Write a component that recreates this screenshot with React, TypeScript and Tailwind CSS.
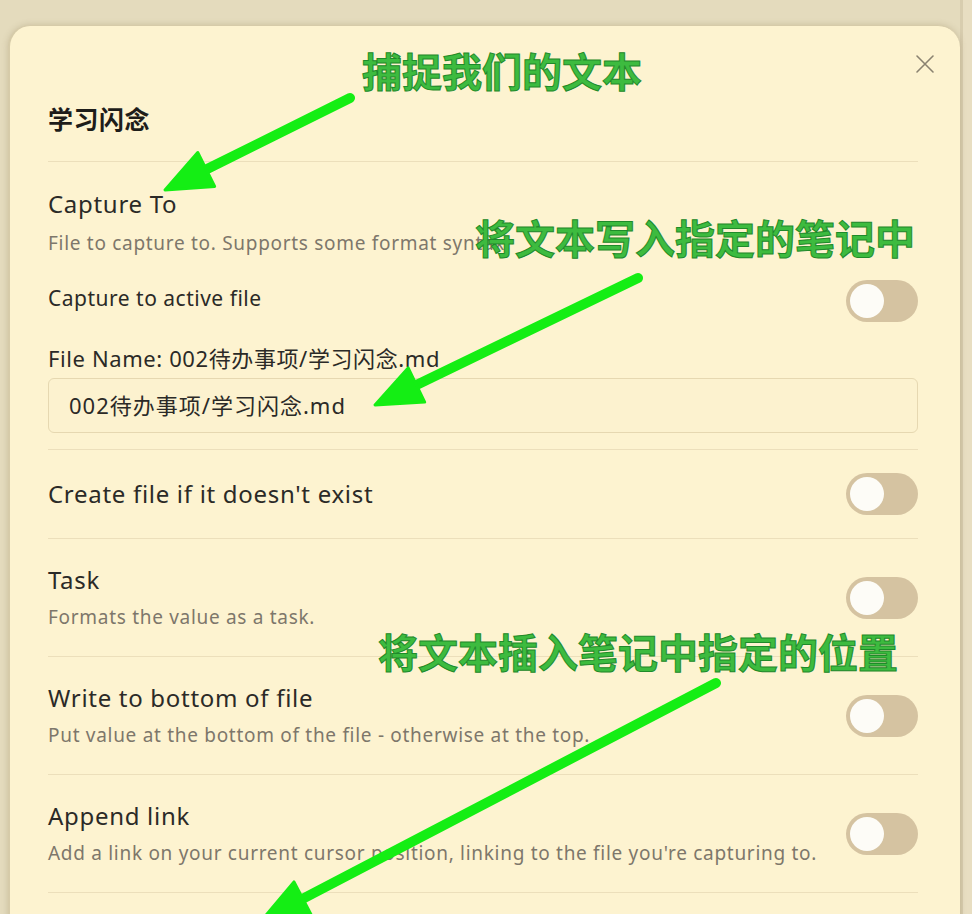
import React from 'react';

const uiFont = { fontFamily: '"Noto Sans", "Noto Sans CJK SC", sans-serif' };
const noteFont = { fontFamily: '"Noto Sans CJK SC", sans-serif' };

const Toggle: React.FC = () => (
    <div className="w-[72px] h-[42px] shrink-0 rounded-full bg-[#d5c3a1] p-[4px] flex items-center">
        <div className="w-[34px] h-[34px] rounded-full bg-[#fdfcf7]" />
    </div>
);

interface SettingRowProps {
    title: string;
    desc?: string;
}

const SettingRow: React.FC<SettingRowProps> = ({ title, desc }) => (
    <div className={`flex items-center justify-between gap-6 border-b border-[#ecdfbb] ${desc ? 'py-[26px]' : 'py-[23px]'}`}>
        <div className="flex-1">
            <div className="text-[24px] leading-[30px] tracking-[0.7px] text-[#2b2a27]">{title}</div>
            {desc && <div className="mt-[9px] text-[19px] leading-[26px] tracking-[0.7px] text-[#7d776b]">{desc}</div>}
        </div>
        <Toggle />
    </div>
);

const Note: React.FC<{ text: string; className: string }> = ({ text, className }) => (
    <div
        className={`absolute text-[40px] leading-[44px] font-bold text-[#3dbb3f] whitespace-nowrap ${className}`}
        style={{ ...noteFont, WebkitTextStroke: '1px #1f8a2a' }}
    >
        {text}
    </div>
);

const Arrows: React.FC = () => {
    const arrows = [
        { x1: 350, y1: 98, x2: 165, y2: 190 },
        { x1: 638, y1: 278, x2: 375, y2: 405 },
        { x1: 716, y1: 683, x2: 262, y2: 920 },
    ];
    return (
        <svg className="absolute inset-0 pointer-events-none" width="972" height="914" viewBox="0 0 972 914">
            {arrows.map((a, i) => {
                const dx = a.x2 - a.x1;
                const dy = a.y2 - a.y1;
                const len = Math.sqrt(dx * dx + dy * dy);
                const ux = dx / len;
                const uy = dy / len;
                const head = 46;
                const half = 19;
                const bx = a.x2 - ux * head;
                const by = a.y2 - uy * head;
                const p1 = `${bx - uy * half},${by + ux * half}`;
                const p2 = `${bx + uy * half},${by - ux * half}`;
                return (
                    <g key={i}>
                        <line x1={a.x1} y1={a.y1} x2={bx + ux * 4} y2={by + uy * 4} stroke="#14ee14" strokeWidth={10} strokeLinecap="round" />
                        <polygon points={`${a.x2},${a.y2} ${p1} ${p2}`} fill="#14ee14" strokeLinejoin="round" stroke="#14ee14" strokeWidth={3} />
                    </g>
                );
            })}
        </svg>
    );
};

export default function App() {
    return (
        <div className="relative w-[972px] h-[914px] overflow-hidden bg-[#e4dbbd]" style={uiFont}>
            <div className="absolute right-0 top-0 bottom-0 w-[12px] bg-[#e8dec2] border-l-[3px] border-[#d8cdaf]" />
            <div className="relative ml-[8px] mt-[25px] w-[952px] min-h-[900px] rounded-t-[22px] bg-[#fdf3d0] border-l-[2px] border-t border-[#d6cba9] shadow-[0_0_6px_rgba(120,100,60,0.25)] pl-[38px] pr-[42px] pt-[78px]">
                <button className="absolute top-[28px] right-[25px] w-[20px] h-[20px] text-[#8a8270]">
                    <svg viewBox="0 0 20 20" width="20" height="20" fill="none" stroke="currentColor" strokeWidth="1.6" strokeLinecap="round">
                        <path d="M2 2 L18 18 M18 2 L2 18" />
                    </svg>
                </button>

                <h2 className="text-[25px] leading-[30px] tracking-[0.5px] font-bold text-[#1e1d1a] mb-[27px]">学习闪念</h2>

                <div className="border-t border-[#ecdfbb]" />

                <div className="pt-[27px] pb-[16px] border-b border-[#ecdfbb]">
                    <div className="text-[24px] leading-[30px] tracking-[0.7px] text-[#2b2a27]">Capture To</div>
                    <div className="mt-[11px] text-[19px] leading-[26px] tracking-[0.7px] text-[#7d776b]">File to capture to. Supports some format syntax.</div>
                    <div className="mt-[24px] flex items-center justify-between">
                        <span className="text-[21px] leading-[28px] tracking-[0.5px] text-[#2b2a27] -mt-[6px]">Capture to active file</span>
                        <Toggle />
                    </div>
                    <div className="mt-[22px] text-[22px] leading-[28px] tracking-[0.6px] text-[#2b2a27]">File Name: 002待办事项/学习闪念.md</div>
                    <div className="mt-[6px] h-[55px] rounded-[6px] border border-[#e6d8b1] bg-[#fcf2cf] px-[20px] flex items-center text-[22px] tracking-[1px] text-[#2b2a27]">
                        002待办事项/学习闪念.md
                    </div>
                </div>

                <SettingRow title="Create file if it doesn't exist" />
                <SettingRow title="Task" desc="Formats the value as a task." />
                <SettingRow title="Write to bottom of file" desc="Put value at the bottom of the file - otherwise at the top." />
                <SettingRow title="Append link" desc="Add a link on your current cursor position, linking to the file you're capturing to." />
            </div>

            <Note text="捕捉我们的文本" className="left-[362px] top-[48px]" />
            <Note text="将文本写入指定的笔记中" className="left-[475px] top-[215px]" />
            <Note text="将文本插入笔记中指定的位置" className="left-[378px] top-[629px]" />
            <Arrows />
        </div>
    );
}
